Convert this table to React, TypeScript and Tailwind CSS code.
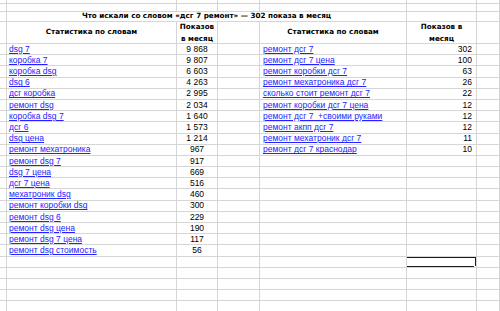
import React from "react";

const LEFT: [string, string][] = [
  ["dsg 7", "9 868"],
  ["коробка 7", "9 807"],
  ["коробка dsg", "6 603"],
  ["dsg 6", "4 263"],
  ["дсг коробка", "2 995"],
  ["ремонт dsg", "2 034"],
  ["коробка dsg 7", "1 640"],
  ["дсг 6", "1 573"],
  ["dsg цена", "1 214"],
  ["ремонт мехатроника", "967"],
  ["ремонт dsg 7", "917"],
  ["dsg 7 цена", "669"],
  ["дсг 7 цена", "516"],
  ["мехатроник dsg", "460"],
  ["ремонт коробки dsg", "300"],
  ["ремонт dsg 6", "229"],
  ["ремонт dsg цена", "190"],
  ["ремонт dsg 7 цена", "117"],
  ["ремонт dsg стоимость", "56"],
];

const RIGHT: [string, string][] = [
  ["ремонт дсг 7", "302"],
  ["ремонт дсг 7 цена", "100"],
  ["ремонт коробки дсг 7", "63"],
  ["ремонт мехатроника дсг 7", "26"],
  ["сколько стоит ремонт дсг 7", "22"],
  ["ремонт коробки дсг 7 цена", "12"],
  ["ремонт дсг 7  +своими руками", "12"],
  ["ремонт акпп дсг 7", "12"],
  ["ремонт мехатроник дсг 7", "11"],
  ["ремонт дсг 7 краснодар", "10"],
];

const DATA_ROWS = 24;
const cell = "border-r border-b border-[#d6d6d6] overflow-hidden";
const bold = "font-bold font-['DejaVu_Sans',sans-serif] text-[7.2px]";

function Empty() {
  return <div className={cell} />;
}

export default function App() {
  return (
    <div className="w-[500px] h-[311px] overflow-hidden bg-white text-[8.5px] text-black font-['Liberation_Sans',Arial,sans-serif]">
      <div className="grid grid-cols-[7px_170px_41px_42px_147px_70px_23px] grid-rows-[4px_7.5px_10.5px_22px_repeat(24,11.2px)]">
        {/* top empty rows */}
        {Array.from({ length: 14 }).map((_, i) => (
          <Empty key={"t" + i} />
        ))}

        {/* title */}
        <Empty />
        <div className={`${cell} ${bold} col-span-4 flex items-center justify-center whitespace-nowrap`}>
          Что искали со словом «дсг 7 ремонт» — 302 показа в месяц
        </div>
        <Empty />
        <Empty />

        {/* headers */}
        <Empty />
        <div className={`${cell} ${bold} flex items-center justify-center`}>
          Статистика по словам
        </div>
        <div className={`${cell} ${bold} flex items-center justify-center text-center leading-[12px]`}>
          Показов в месяц
        </div>
        <Empty />
        <div className={`${cell} ${bold} flex items-center justify-center`}>
          Статистика по словам
        </div>
        <div className={`${cell} ${bold} flex items-center justify-center text-center leading-[12px] px-[8px]`}>
          Показов в месяц
        </div>
        <Empty />

        {/* data */}
        {Array.from({ length: DATA_ROWS }).map((_, i) => {
          const l = LEFT[i];
          const r = RIGHT[i];
          return (
            <React.Fragment key={i}>
              <Empty />
              <div className={`${cell} flex items-center pl-[2px] whitespace-nowrap`}>
                {l && <a className="text-[#2323ff] underline">{l[0]}</a>}
              </div>
              <div className={`${cell} flex items-center justify-center whitespace-nowrap`}>
                {l && l[1]}
              </div>
              <Empty />
              <div className={`${cell} flex items-center pl-[3px] whitespace-pre`}>
                {r && <a className="text-[#2323ff] underline">{r[0]}</a>}
              </div>
              <div className={`${cell} relative flex items-center justify-end pr-[4px] whitespace-nowrap`}>
                {r && r[1]}
                {i === 19 && (
                  <>
                    <div className="absolute -left-[2px] -top-[1px] -right-[1px] -bottom-[1px] border-2 border-[#1a1a1a]" />
                    <div className="absolute -right-[2px] -bottom-[3px] w-[4px] h-[4px] bg-[#1a1a1a] border border-white" />
                  </>
                )}
              </div>
              <Empty />
            </React.Fragment>
          );
        })}
      </div>
    </div>
  );
}
